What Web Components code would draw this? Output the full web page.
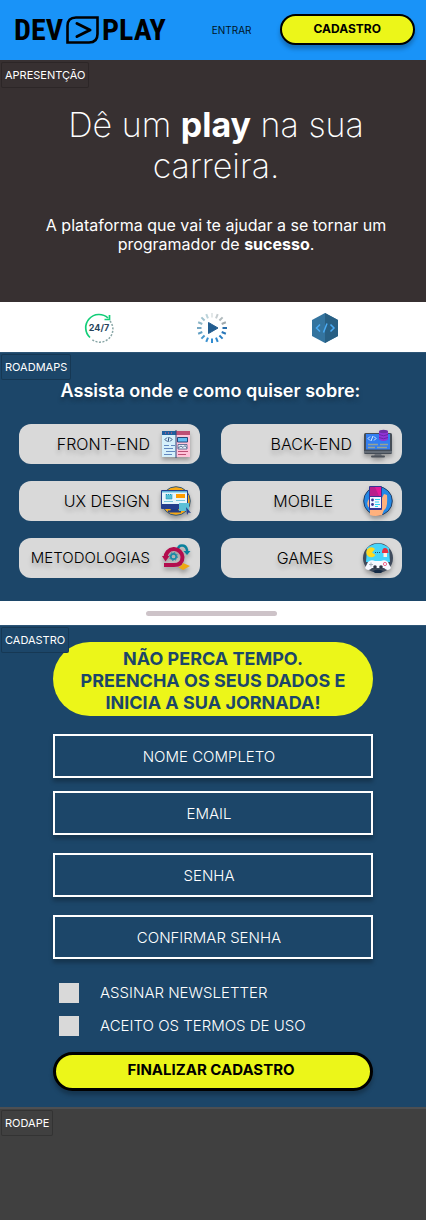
<!DOCTYPE html>
<html lang="pt-BR">
<head>
<meta charset="utf-8">
<meta name="viewport" content="width=device-width, initial-scale=1">
<title>DEV PLAY</title>
<style>
  body { margin: 0; background: #404040; font-family: Inter, "Liberation Sans", sans-serif; }
</style>
</head>
<body>
<dev-page></dev-page>

<template id="t-page">
  <style>
    :host { display: flex; flex-direction: column; min-height: 100vh; background: #fff; }
    dev-footer { flex: 1; }
  </style>
  <dev-header></dev-header>
  <dev-hero></dev-hero>
  <dev-perks></dev-perks>
  <dev-roadmaps></dev-roadmaps>
  <dev-divider></dev-divider>
  <dev-signup></dev-signup>
  <dev-footer></dev-footer>
</template>

<template id="t-header">
  <style>
    :host { display: block; background: #1993f8; }
    header { display: flex; align-items: center; padding: 14px 11px 15px 14px; }
    nav { display: flex; align-items: center; gap: 28px; margin-left: auto; }
    a { color: #00141f; font-size: 10px; line-height: 16px; text-decoration: none; }
  </style>
  <header>
    <dev-logo></dev-logo>
    <nav><a href="#entrar">ENTRAR</a><dev-button size="small">CADASTRO</dev-button></nav>
  </header>
</template>

<template id="t-logo">
  <style>
    :host { display: flex; align-items: center; gap: 3px; color: #000;
      font: bold 30px/30px "Liberation Sans Narrow", "Roboto Condensed", "Open Sans Condensed", "Inter", sans-serif; }
    svg { display: block; }
  </style>
  <span>DEV</span>
  <svg width="33" height="28" viewBox="0 0 33 28" fill="none" stroke="#000" aria-hidden="true">
    <path d="M10 1.5H31.5V18Q31.5 26.5 23 26.5H1.5V10Q1.5 1.5 10 1.5Z" stroke-width="2.6"/>
    <path d="M11 7.500 24 14 11 20.500" stroke-width="3" stroke-linecap="round" stroke-linejoin="round"/>
  </svg>
  <span>PLAY</span>
</template>

<template id="t-button">
  <style>
    :host { display: block; }
    button { display: block; width: 100%; box-sizing: border-box; margin: 0; color: #000; background: #ecf619;
      border: 3px solid #000; border-radius: 20px; padding: 5px 8px 8px 4px; font: bold 15px/20px Inter, sans-serif;
      box-shadow: 0 4px 4px rgba(0,0,0,.25); cursor: pointer; }
    :host([size="small"]) button { border-width: 2px; padding: 5px 32px 6px; font-size: 12px; line-height: 16px; }
  </style>
  <button type="button"><slot></slot></button>
</template>

<template id="t-tag">
  <style>
    :host { position: absolute; z-index: 1; top: 2px; left: 1px; box-sizing: border-box; padding: 3px; background: inherit;
      border: 1px solid rgba(0,0,0,.2); border-radius: 2px; color: #fff; font-size: 11px; line-height: 18px; }
  </style>
  <slot></slot>
</template>

<template id="t-hero">
  <style>
    :host { display: block; position: relative; background: #373031; color: #fff; text-align: center; }
    section { padding: 44px 37px 48px 43px; }
    h1 { margin: 0; font-size: 34px; line-height: 41px; font-weight: 200; }
    p { margin: 30px 0 0; font-size: 16px; line-height: 19px; }
    b { font-weight: 700; }
  </style>
  <dev-tag>APRESENTÇÃO</dev-tag>
  <section>
    <h1>Dê um <b>play</b> na sua<br>carreira.</h1>
    <p>A plataforma que vai te ajudar a se tornar um<br>programador de <b>sucesso</b>.</p>
  </section>
</template>

<template id="t-perks">
  <style>
    :host { display: flex; justify-content: center; gap: 83px; padding: 11px 3px 9px 0; background: #fff; }
    svg { display: block; }
    text { font: 700 9px Inter, sans-serif; fill: #27445c; }
  </style>
  <svg width="30" height="30" viewBox="0 0 30 30" fill="none">
    <path d="M6 24.500A13 13 0 0 1 24 5" stroke="#12ce78" stroke-width="1.700"/>
    <path d="M25.500 2V6.500H20.500" stroke="#12ce78" stroke-width="1.700"/>
    <path d="M26 8A13 13 0 0 1 8 26.500" stroke="#87a5a5" stroke-width="1.500" stroke-dasharray="2 1.500"/>
    <text x="15" y="18" text-anchor="middle">24/7</text>
  </svg>
  <svg width="30" height="30" viewBox="0 0 30 30">
    <g class="ticks" stroke-width="2"></g>
    <path d="M11.500 9.500 21 15 11.500 20.500Z" fill="#235d90" stroke="#235d90" stroke-linejoin="round"/>
  </svg>
  <svg width="30" height="30" viewBox="0 0 30 30" fill="none">
    <path d="M15 0 28 7V23L15 30 2 23V7Z" fill="#34749f"/>
    <path d="M15 0 28 7V23L15 30Z" fill="#285f83"/>
    <path d="M10 11.500 6.500 15 10 18.500M20.500 11.500 24 15 20.500 18.500M17 10.500 13.500 19.500" stroke="#4aabf5" stroke-width="1.500"/>
  </svg>
</template>

<template id="t-roadmaps">
  <style>
    :host { display: block; position: relative; background: #1c4669; }
    section { padding: 27px 24px 23px 19px; border-top: 1px solid #2d5576; }
    h2 { margin: 0 0 22px; color: #fff; font-size: 18px; line-height: 22px; font-weight: 600;
      text-align: center; text-shadow: 0 4px 4px rgba(0,0,0,.25); }
    div { display: grid; grid-template-columns: repeat(2, minmax(0, 1fr)); gap: 17px 21px; }
  </style>
  <dev-tag>ROADMAPS</dev-tag>
  <section>
    <h2>Assista onde e como quiser sobre:</h2>
    <div>
      <dev-track>FRONT-END
        <svg slot="icon" width="30" height="30" viewBox="0 0 30 30">
          <path fill="#d5f0fb" d="M1 2H15V28H1Z"/><path fill="#ffc3d9" d="M15 2H29V28H15Z"/>
          <path fill="#1f5f9f" d="M1 2H15V6H1Z"/><path fill="#bd4f75" d="M15 2H29V6H15Z"/>
          <path fill="#62bdf2" stroke="#294778" d="M16.500 8.500H26.500V13H16.500Z"/>
          <path fill="#e8f4fb" stroke="#294778" stroke-width=".7" d="M17 15.500H26V20H17Z"/>
          <path d="M17 19 20 17 22 18.500 24 16.500 26 19" fill="none" stroke="#5b6c94"/>
          <path d="M15 1V29M6 8.500 4 10.500 6 12.500M9 8.500 11 10.500 9 12.500M8 8 7 13" fill="none" stroke="#294778"/>
          <path d="M3 19.500H12M3 16.500H8M10 16.500H14M5 22.500H14M3 25.500H11" stroke="#6288c0"/>
          <path d="M17 22.500H27M17 25.500H25" stroke="#bd4f75"/>
          <path d="M4 4H5M7 4H8M10 4H11" stroke="#f6607b"/>
        </svg>
      </dev-track>
      <dev-track>BACK-END
        <svg slot="icon" width="30" height="30" viewBox="0 0 30 30">
          <path d="M12 24H18L19 28H11Z" fill="#6c7178"/><rect x="8" y="26.500" width="14" height="2" rx="1" fill="#4d525a"/>
          <rect x="1" y="4" width="28" height="21" rx="1.500" fill="#454d57"/>
          <path d="M3 5H27V20.500H3Z" fill="#337ef0"/><path d="M1 22H29V24H1Z" fill="#646c76"/>
          <path d="M7 7.500 5 9.500 7 11.500M11 7.500 13 9.500 11 11.500M10 7 8 12" stroke="#d8eaff" fill="none"/>
          <path d="M5 15.500H15M17 15.500H25M5 18.500H12M14 18.500H24" stroke="#97a395" stroke-width="1.500"/>
          <path d="M16 2.500V10.500Q20.500 13.500 25 10.500V2.500Z" fill="#9134d7"/><ellipse cx="20.500" cy="2.500" rx="4.500" ry="1.700" fill="#6f2da8"/>
          <path d="M16 5.500Q20.500 8 25 5.500M16 8.500Q20.500 11 25 8.500" stroke="#6b24a7" fill="none"/>
        </svg>
      </dev-track>
      <dev-track>UX DESIGN
        <svg slot="icon" width="30" height="30" viewBox="0 0 30 30">
          <circle cx="15" cy="15" r="14.300" fill="#f7a916" stroke="#31577b"/>
          <path d="M10 22H17L18 26H9Z" fill="#213b82"/><path d="M7 25.500H20" stroke="#263d82" stroke-width="2"/>
          <rect y="4" width="27" height="19" rx="1" fill="#253e8d"/><path d="M1 5H26V18H1Z" fill="#e6f5fb"/><path d="M1 5H26V6.500H1Z" fill="#5eb5dc"/>
          <path d="M15 8H24V12H15Z" fill="#ff9d00"/><path d="M5 8.500H11V13H5Z" fill="#53bfd4" stroke="#1791bd" stroke-dasharray="1 1"/>
          <path d="M3 15.500H12M15 14.500H24" stroke="#7ac5de"/>
          <path d="M18 17H28V25H18Z" fill="#5bc0d6"/><path d="M25 21 30 27 27.500 26.500 26 29Z" fill="#29418c"/>
        </svg>
      </dev-track>
      <dev-track gap="wide">MOBILE
        <svg slot="icon" width="30" height="30" viewBox="0 0 30 30">
          <circle cx="15" cy="15" r="14.300" fill="#2388e5" stroke="#233e64"/>
          <path d="M6 13Q2 18 7 23V29Q12 31 19 29L21 24Q25 22 24 9L21 8 19 12V23H8Z" fill="#ffb17d"/>
          <rect x="6" y="0" width="13" height="24" rx="1" fill="#353694"/><path d="M7 1H18V10H7Z" fill="#e51a9a"/><path d="M7 1H12L16 10H7Z" fill="#b8208c"/>
          <path d="M7 11H18V22H7Z" fill="#f2f6ff"/><circle cx="9.500" cy="14" r="1.400" fill="#353694"/><circle cx="9.500" cy="18.500" r="1.400" fill="#353694"/>
          <path d="M12 13.500H17M12 16H16M12 18.500H17M12 20.500H15" stroke="#28d6f2"/>
        </svg>
      </dev-track>
      <dev-track text="small">METODOLOGIAS
        <svg slot="icon" width="30" height="30" viewBox="0 0 30 30" fill="none">
          <path d="M17 7Q17 2.500 21 2.500T26 7V9" stroke="#09819d" stroke-width="2.500"/><path d="M22.500 8H29.500L26 12Z" fill="#09819d"/>
          <path d="M4.500 15A8.500 8.500 0 0 1 21.500 14Q21.500 22 13 22H3" stroke="#b30d4e" stroke-width="4"/>
          <path d="M1 13H8.500L4.500 18.500Z" fill="#b30d4e"/>
          <path d="M17 24Q20 24 22 20L29 23 22 27Z" fill="#eea914"/>
          <circle cx="12.500" cy="13.500" r="2.700" stroke="#1989a7" stroke-width="1.700"/>
          <circle cx="12.500" cy="13.500" r="4" stroke="#1989a7" stroke-width="1" stroke-dasharray="1.500 1.600"/>
        </svg>
      </dev-track>
      <dev-track gap="wide">GAMES
        <svg slot="icon" width="30" height="30" viewBox="0 0 30 30">
          <circle cx="15" cy="15" r="15" fill="#3e4a5c"/><path d="M4 5Q15-4 26 5L27 19H3Z" fill="#46d4fa"/>
          <path d="M9 9.500 12 6A5 5 0 1 0 12.500 12Z" fill="#ffd91f"/><path d="M12 9.500H18" stroke="#245674" stroke-dasharray="1 1"/>
          <path d="M19 10Q19 5 22 5T25.500 10Z" fill="#e63040"/><path d="M20.500 10H24V14H20.500Z" fill="#fff1e4"/>
          <path d="M5 19Q8 16 12 18H18Q22 16 25 19L28 25Q25 29 21 25H9Q5 29 2 25Z" fill="#f7f8ff"/>
          <path d="M6 21.500H10M8 19.500V23.500" stroke="#a3afbb"/><circle cx="22" cy="21" r="1.600" fill="none" stroke="#f2688c"/>
          <circle cx="12" cy="24" r="1.800" fill="#2c3444"/><circle cx="18" cy="24" r="1.800" fill="#2c3444"/>
          <path d="M10 28Q15 25 20 28L18 30H12Z" fill="#142b46"/>
        </svg>
      </dev-track>
    </div>
  </section>
</template>

<template id="t-track">
  <style>
    :host { display: block; }
    button { display: flex; align-items: center; justify-content: flex-end; gap: 11px; width: 100%; height: 40px; margin: 0;
      padding: 0 9px; border: 0; border-radius: 12px; background: #d9d9d9; color: #000; cursor: pointer;
      font: 300 16px/20px Inter, sans-serif; text-shadow: 0 4px 4px rgba(0,0,0,.25); }
    :host([gap="wide"]) button { gap: 30px; }
    :host([text="small"]) button { font-size: 15px; }
    ::slotted(svg) { display: block; filter: drop-shadow(0 3px 2px rgba(0,0,0,.3)); }
  </style>
  <button type="button"><span><slot></slot></span><slot name="icon"></slot></button>
</template>

<template id="t-divider">
  <style>
    :host { display: flex; justify-content: center; padding: 10px 3px 9px 0; background: #fff; }
    hr { width: 131px; height: 5px; margin: 0; border: 0; border-radius: 3px; background: #cdc3c8; }
  </style>
  <hr>
</template>

<template id="t-signup">
  <style>
    :host { display: block; position: relative; background: #1c4669; }
    form { display: flex; flex-direction: column; padding: 16px 53px; border-top: 1px solid #2d5576; }
    h2 { margin: 0 0 18px; padding: 6px 24px 2px; border-radius: 37px; background: #ecf619; color: #1c4669; text-align: center;
      font-size: 18px; line-height: 22px; font-weight: 700; }
    .fields { display: grid; gap: 18px; }
    .fields.tight { gap: 13px; margin-bottom: 18px; }
    .checks { display: grid; gap: 13px; padding: 24px 6px 16px; }
  </style>
  <dev-tag>CADASTRO</dev-tag>
  <form>
    <h2>NÃO PERCA TEMPO.<br>PREENCHA OS SEUS DADOS E INICIA A SUA JORNADA!</h2>
    <div class="fields tight">
      <dev-field label="NOME COMPLETO" type="text"></dev-field>
      <dev-field label="EMAIL" type="email"></dev-field>
    </div>
    <div class="fields">
      <dev-field label="SENHA" type="password"></dev-field>
      <dev-field label="CONFIRMAR SENHA" type="password"></dev-field>
    </div>
    <div class="checks">
      <dev-check>ASSINAR NEWSLETTER</dev-check>
      <dev-check>ACEITO OS TERMOS DE USO</dev-check>
    </div>
    <dev-button>FINALIZAR CADASTRO</dev-button>
  </form>
</template>

<template id="t-field">
  <style>
    :host { display: block; }
    input { display: block; width: 100%; height: 44px; box-sizing: border-box; margin: 0; padding: 0 8px 0 0; border: 2px solid #fff;
      border-radius: 0; background: #1c4669; color: #fff; text-align: center; font: 300 15px/20px Inter, sans-serif;
      box-shadow: 0 4px 4px rgba(0,0,0,.25); }
    input::placeholder { color: #fff; opacity: 1; }
  </style>
  <input>
</template>

<template id="t-check">
  <style>
    :host { display: block; }
    label { display: flex; align-items: center; gap: 21px; color: #fff; font-size: 15px; line-height: 20px; font-weight: 300; }
    input { appearance: none; flex: none; width: 20px; height: 20px; margin: 0; background: #d9d9d9; }
    input:checked { background: #ecf619; }
  </style>
  <label><input type="checkbox"><span><slot></slot></span></label>
</template>

<template id="t-footer">
  <style>
    :host { display: block; position: relative; min-height: 110px; background: #404040; border-top: 2px solid #4d4f52; }
    dev-tag { top: 1px; }
  </style>
  <dev-tag>RODAPE</dev-tag>
</template>

<script>
  class Base extends HTMLElement {
    constructor() {
      super();
      const t = document.getElementById(this.localName.replace('dev-', 't-'));
      this.attachShadow({ mode: 'open' }).append(t.content.cloneNode(true));
    }
  }
  for (const name of ['tag', 'logo', 'button', 'track', 'check', 'header', 'hero', 'roadmaps', 'divider', 'footer']) {
    customElements.define('dev-' + name, class extends Base {});
  }
  customElements.define('dev-field', class extends Base {
    connectedCallback() {
      const input = this.shadowRoot.querySelector('input');
      input.type = this.getAttribute('type');
      input.placeholder = this.getAttribute('label');
      input.setAttribute('aria-label', this.getAttribute('label'));
    }
  });
  // Sixteen ticks round the play mark, paling from deep blue to grey.
  customElements.define('dev-perks', class extends Base {
    connectedCallback() {
      const colors = ['#e3e8e9', '#c5cccf', '#b0babd', '#a0aaae', '#286eac', '#2876b8', '#2a7fc3', '#2c87cc',
        '#318dd2', '#3b92d1', '#4998cc', '#619fc4', '#75a7c2', '#8cb5c7', '#a1c3cf', '#bcd3da'];
      this.shadowRoot.querySelector('.ticks').innerHTML = colors.map((c, i) =>
        `<path d="M15 0V4.500" stroke="${c}" transform="rotate(${i * 22.5} 15 15)"/>`).join('');
    }
  });
  customElements.define('dev-signup', class extends Base {});
  customElements.define('dev-page', class extends Base {});
</script>
</body>
</html>
